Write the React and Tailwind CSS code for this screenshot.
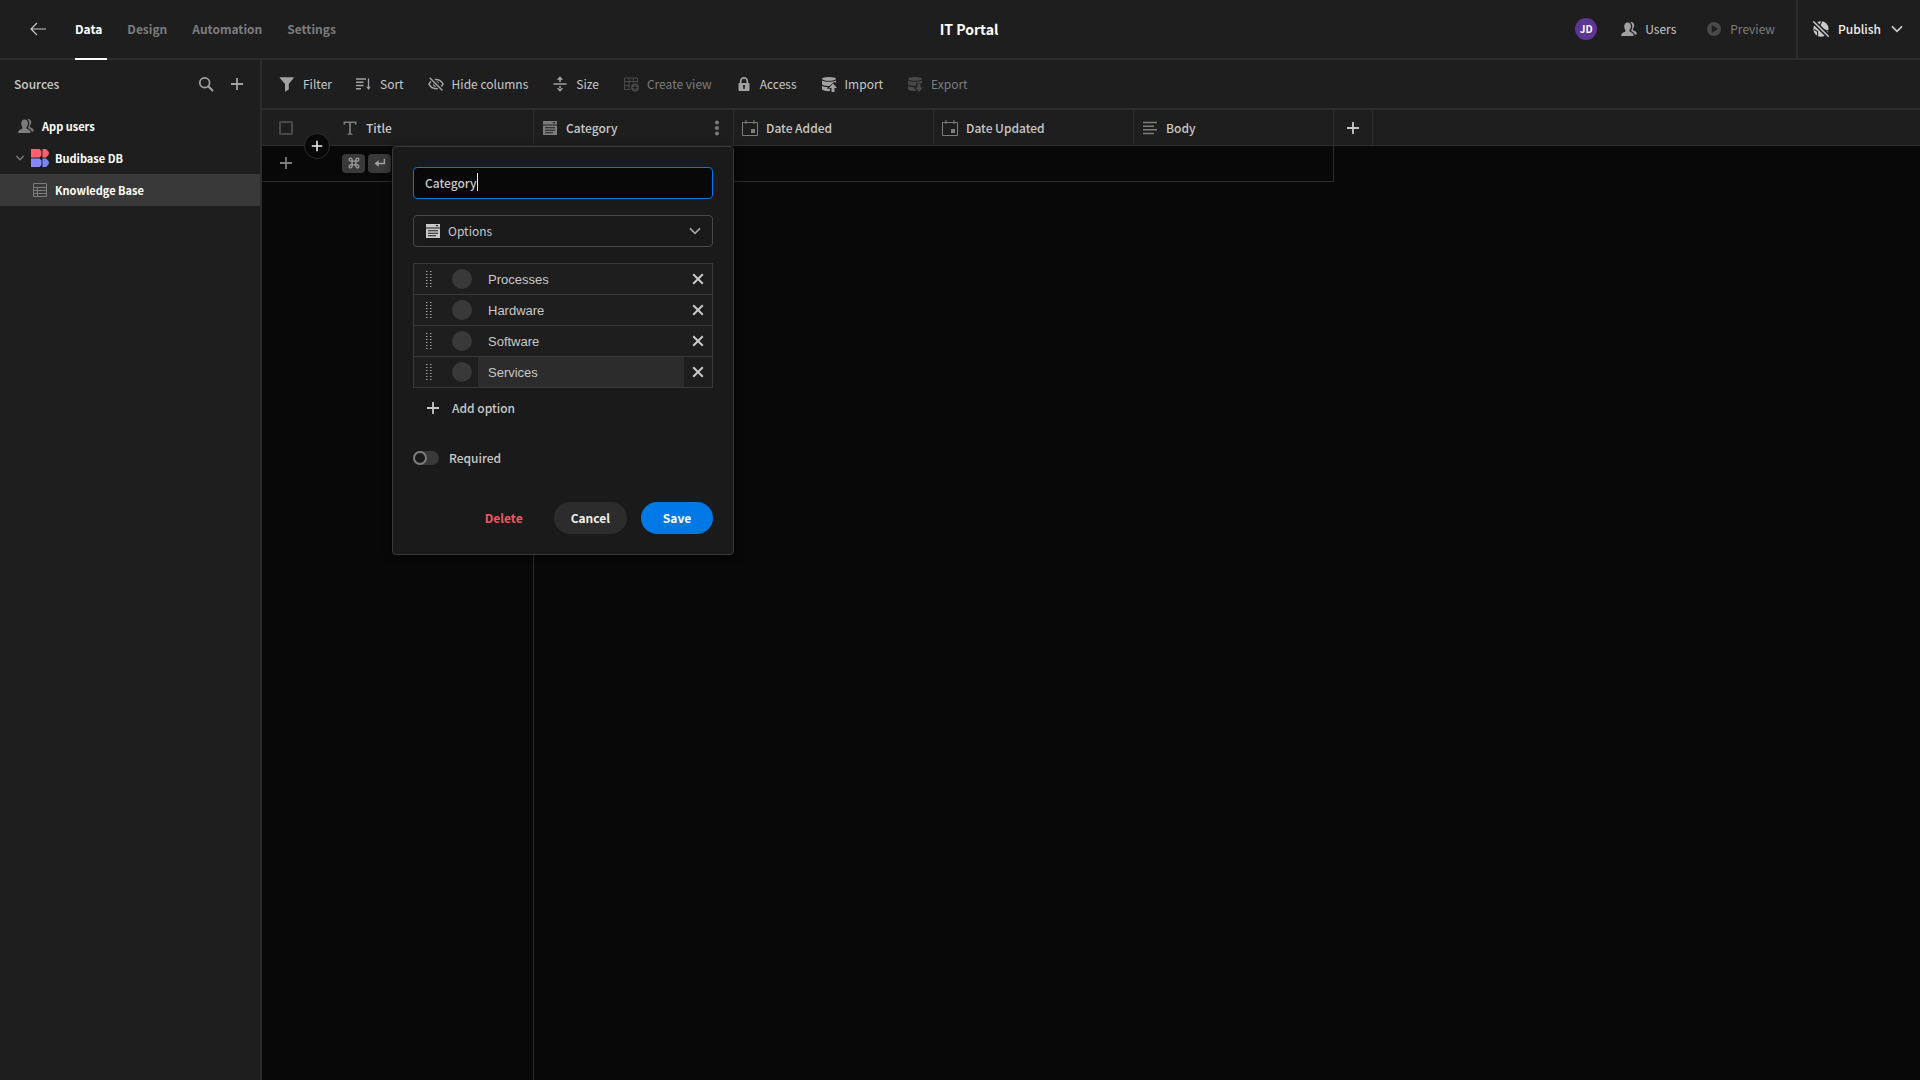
import React from "react";

// Small drawing box shared by all the icons
const Icon = ({ size = 16, className = "", children }) => (
  <svg
    width={size}
    height={size}
    viewBox="0 0 16 16"
    fill="currentColor"
    className={`shrink-0 ${className}`}
    aria-hidden="true"
  >
    {children}
  </svg>
);

const stroke = { fill: "none", stroke: "currentColor" };

const BackIcon = () => (
  <Icon>
    <path d="M16 8H1.5M7 2 1 8l6 6" {...stroke} strokeWidth="1.2" />
  </Icon>
);

const ChevronIcon = ({ className, size }) => (
  <Icon className={className} size={size}>
    <path d="m3.5 5.8 4.5 4.5 4.5-4.5" {...stroke} strokeWidth="1.8" strokeLinecap="round" />
  </Icon>
);

const SearchIcon = () => (
  <Icon>
    <circle cx="6.7" cy="6.7" r="4.9" {...stroke} strokeWidth="1.7" />
    <path d="m10.3 10.3 4.2 4.2" {...stroke} strokeWidth="2" strokeLinecap="round" />
  </Icon>
);

const PlusIcon = ({ className, size }) => (
  <Icon className={className} size={size}>
    <path d="M8 2v12M2 8h12" {...stroke} strokeWidth="1.8" />
  </Icon>
);

const UsersIcon = ({ className }) => (
  <Icon className={className}>
    <path d="M6.6 1.6c2 0 3.4 1.5 3.4 3.7 0 1.5-.6 2.9-1.5 3.7v1.1c0 .5.3.8.8 1 2 .7 3.2 1.4 3.2 3.2v.7H.3v-.7c0-1.8 1.3-2.5 3.3-3.2.5-.2.8-.5.8-1V9C3.6 8.200 3.200 6.800 3.200 5.300c0-2.200 1.400-3.700 3.400-3.700Z" />
    <path d="M9.300 1.200c2.200-.5 3.900.9 3.900 3.400 0 1.300-.5 2.500-1.300 3.200v.9c0 .4.3.7.7.8 1.900.7 3.100 1.400 3.100 3.200v.8h-2.200c-.3-1.800-1.600-2.600-3.300-3.200V9.200c.7-1 1.100-2.300 1.100-3.800 0-1.800-.8-3.300-2-4.200Z" />
  </Icon>
);

const PreviewIcon = () => (
  <Icon>
    <path fillRule="evenodd" d="M8 1a7 7 0 1 1 0 14A7 7 0 0 1 8 1ZM5.8 4v8L12 8Z" />
  </Icon>
);

const PublishIcon = () => (
  <Icon size={18}>
    <circle cx="8" cy="8" r="6.8" />
    <path d="M8.3 1c.6 1.800-1.300 2-1 4M11 8.500l2 1.500 2-1M2 8.500l3 1.800v3.700" fill="none" className="stroke-[#1e1e1e]" />
    <path d="m.5.5 15 15" className="stroke-[#1e1e1e]" strokeWidth="4" />
    <path d="m1.500 1.500 13 13" {...stroke} strokeWidth="1.3" strokeLinecap="round" />
  </Icon>
);

const FilterIcon = () => (
  <Icon>
    <path d="M1 1.2h13.4c.4 0 .5.4.3.7L9.800 8v5.500L6.400 15.600c-.2.100-.4 0-.4-.2V8L.800 1.900c-.2-.3-.1-.7.2-.7Z" />
  </Icon>
);

const SortIcon = () => (
  <Icon>
    <path d="M0 3h10M0 6.200h7.500M0 9.500h7.500M0 12.700h5" {...stroke} strokeWidth="1.5" />
    <path d="M12.5 2.500v10" {...stroke} strokeWidth="1.3" />
    <path d="M10.3 10.800h4.400L12.500 14Z" />
  </Icon>
);

const HideIcon = () => (
  <Icon>
    <path d="M1 8.200C2.500 5.300 5 3.600 8 3.600s5.500 1.700 7 4.600c-1.500 2.900-4 4.500-7 4.500S2.500 11.100 1 8.200Z" {...stroke} strokeWidth="1.5" />
    <circle cx="8" cy="8" r="2.9" />
    <path d="m1.700 1 13.300 14" className="stroke-[#1e1e1e]" strokeWidth="4" />
    <path d="m1.700 1.700 12.800 12.800" {...stroke} strokeWidth="1.5" />
  </Icon>
);

const SizeIcon = () => (
  <Icon>
    <path d="M1.500 7.200h13v1.600h-13zM7.200 3h1.600v3H7.200zM7.200 10h1.600v3H7.200zM8 .3l3.200 3.400H4.800ZM8 15.700l3.200-3.400H4.800Z" />
  </Icon>
);

const ViewIcon = () => (
  <Icon>
    <path d="M7.500 13.500H1.500V2h13v5M1.500 5.500h13M1.500 9.500H7M6 2v11.500M10.300 2v5" {...stroke} />
    <path fillRule="evenodd" d="M12 7.600a4 4 0 1 1 0 8 4 4 0 0 1 0-8Zm-.6 1.600v1.800H9.600v1.200h1.800V14h1.200v-1.800h1.800V11h-1.800V9.200Z" />
  </Icon>
);

const LockIcon = () => (
  <Icon>
    <path d="M4.700 7.500V5.200a3.300 3.300 0 0 1 6.600 0v2.300" {...stroke} strokeWidth="1.7" />
    <path fillRule="evenodd" d="M3.200 7h9.600c.4 0 .7.300.7.700v6.600c0 .4-.3.700-.7.700H3.200c-.4 0-.7-.3-.7-.7V7.700c0-.4.3-.7.7-.7ZM8 8.900a1.200 1.200 0 0 0-.7 2.200V13h1.400v-1.900A1.200 1.200 0 0 0 8 8.900Z" />
  </Icon>
);

const ImportIcon = () => (
  <Icon>
    <ellipse cx="8" cy="2.8" rx="7" ry="1.9" />
    <path d="M1 4.500c2.500 1.700 11.500 1.700 14 0v2.200L13 6 8.600 10H6.900C4 9.900 1.800 9.200 1 8.300Z" />
    <path d="M1 9.800c1.500 1 3.800 1.400 6 1.400l-1 1.600h3v2.300C5 15.400 1.500 14.500 1 13.300Z" />
    <path d="m12 7.500 4 4.500h-2.500v4h-3v-4H8Z" />
  </Icon>
);

const ExportIcon = () => (
  <Icon>
    <ellipse cx="8" cy="2.8" rx="7" ry="1.9" />
    <path d="M1 4.500c2.500 1.700 11.500 1.700 14 0v2.700H9V10C5 10 1.800 9.200 1 8.300Z" />
    <path d="M1 9.800c1.500 1 3.800 1.400 6 1.400l2.500 3.800C5 15.400 1.500 14.500 1 13.300Z" />
    <path d="m12 16-4-4.500h2.500V7.700h3v3.800H16Z" />
  </Icon>
);

const TextIcon = () => (
  <Icon>
    <path d="M1.500 1.500h13v3.300h-1.300c-.1-1.200-.5-1.700-1.600-1.700H8.900v9.500c0 .9.3 1.200 1.700 1.300v.8H5.400v-.8c1.400-.1 1.700-.4 1.700-1.300V3.100H4.400c-1.100 0-1.500.5-1.600 1.700H1.500Z" />
  </Icon>
);

const DropdownIcon = ({ className }) => (
  <Icon className={className}>
    <path fillRule="evenodd" d="M1 1h14v3.500H1ZM10.500 2l1.500 1.700L13.500 2Z" />
    <path fillRule="evenodd" d="M1 5.500h14V15H1ZM3 7.200v1h10v-1ZM3 9.800v1h10v-1ZM3 12.300v1h8v-1Z" />
  </Icon>
);

const CalendarIcon = () => (
  <Icon>
    <path d="M.5 2.500h15v13H.5zM4 0v4M12 0v4" {...stroke} />
    <path d="M9 9h4v4H9z" />
  </Icon>
);

const BodyIcon = () => (
  <Icon>
    <path d="M1 2.500h14M1 6.200h11M1 9.800h14M1 13.500h11" {...stroke} strokeWidth="1.5" />
  </Icon>
);

const MoreIcon = () => (
  <Icon>
    <circle cx="8" cy="2.5" r="2" />
    <circle cx="8" cy="8" r="2" />
    <circle cx="8" cy="13.5" r="2" />
  </Icon>
);

const TableIcon = () => (
  <Icon>
    <path d="M1.500 1.500h13v13h-13zM1.500 5.500h13M1.500 8.500h13M1.500 11.500h13M5.500 5.500v9" {...stroke} />
  </Icon>
);

const CrossIcon = () => (
  <Icon>
    <path d="m3.200 3.200 9.600 9.600M12.800 3.200l-9.600 9.600" {...stroke} strokeWidth="2" />
  </Icon>
);

const EnterIcon = () => (
  <Icon size={14}>
    <path d="M13 3v5.500H4" {...stroke} strokeWidth="1.6" />
    <path d="M6.500 4.800v7.400L1.800 8.500Z" />
  </Icon>
);

const CommandIcon = () => (
  <Icon size={14}>
    <path
      d="M5.800 5.800h4.400v4.400H5.800zM5.800 5.800V4.200a1.700 1.700 0 1 0-1.700 1.600zM10.200 5.800V4.200a1.700 1.700 0 1 1 1.700 1.600zM5.800 10.200v1.600a1.700 1.700 0 1 1-1.700-1.600zM10.200 10.200v1.600a1.700 1.700 0 1 0 1.700-1.600z"
      {...stroke}
      strokeWidth="1.4"
    />
  </Icon>
);

const HandleIcon = () => (
  <svg width="6" height="16" viewBox="0 0 6 16" fill="currentColor" className="shrink-0" aria-hidden="true">
    {[0, 3, 6, 9, 12, 15].map((y) => (
      <path key={y} d={`M0 ${y}h1.500v1H0zM4 ${y}h1.500v1H4z`} />
    ))}
  </svg>
);

const BudibaseLogo = () => (
  <svg width="18" height="18" viewBox="0 0 18 18" className="shrink-0" aria-hidden="true">
    <path fill="#ff5f6d" d="M0 0h8.500L10.500 2v4.500L8.500 8.500H0zM11.500 0H15l2.800 3v2.500L15 8.500h-3.500z" />
    <path fill="#8589ff" d="M0 9.500h8.500l2 2V16l-2 2H0zM11.500 9.500H15l2.800 3V15L15 18h-3.500z" />
    <path fill="#4376d8" d="M13 11h1.200v1.200H13zM15 13h1.200v1.200H15zM13 15h1.200v1.200H13z" />
  </svg>
);

const tabs = ["Data", "Design", "Automation", "Settings"];

const tools = [
  { label: "Filter", icon: FilterIcon },
  { label: "Sort", icon: SortIcon },
  { label: "Hide columns", icon: HideIcon },
  { label: "Size", icon: SizeIcon },
  { label: "Create view", icon: ViewIcon, disabled: true },
  { label: "Access", icon: LockIcon },
  { label: "Import", icon: ImportIcon },
  { label: "Export", icon: ExportIcon, disabled: true },
];

const columns = [
  { label: "Category", icon: DropdownIcon, menu: true },
  { label: "Date Added", icon: CalendarIcon },
  { label: "Date Updated", icon: CalendarIcon },
  { label: "Body", icon: BodyIcon },
];

const options = ["Processes", "Hardware", "Software", "Services"];

const Header = () => (
  <header className="grid h-[60px] shrink-0 grid-cols-[1fr_auto_1fr] border-b-2 border-[#2c2c2c] pl-[18px]">
    <div className="flex items-center pl-3">
      <button type="button" aria-label="Back" className="text-[#c8c8c8]">
        <BackIcon />
      </button>
      <nav className="-mb-0.5 ml-[29px] flex gap-5 self-stretch">
        {tabs.map((tab) => (
          <a
            key={tab}
            href="#"
            className={
              tab === "Data"
                ? "flex items-center border-b-2 border-white pr-[5px] font-semibold text-white"
                : "flex items-center border-b-2 border-transparent pr-[5px] font-semibold text-[#7c7c7c]"
            }
          >
            {tab}
          </a>
        ))}
      </nav>
    </div>
    <h1 className="self-center text-sm font-semibold text-white">IT Portal</h1>
    <div className="flex items-center justify-end">
      <span className="flex size-[22px] items-center justify-center rounded-full bg-[#5c3592] text-[10px] font-semibold text-white">
        JD
      </span>
      <button type="button" className="ml-6 flex items-center gap-2 text-[#c8c8c8]">
        <UsersIcon className="text-[#a2a2a2]" />
        Users
      </button>
      <button type="button" disabled className="ml-[30px] flex items-center gap-2 text-[#7c7c7c]">
        <span className="text-[#494949]">
          <PreviewIcon />
        </span>
        Preview
      </button>
      <button
        type="button"
        className="ml-[21px] flex items-center gap-2 self-stretch border-l-2 border-[#2c2c2c] pr-[15px] pl-3.5 font-medium text-[#efefef]"
      >
        <span className="text-[#c8c8c8]">
          <PublishIcon />
        </span>
        Publish
        <ChevronIcon className="text-[#c8c8c8]" />
      </button>
    </div>
  </header>
);

const Sidebar = () => (
  <aside className="w-[262px] shrink-0 border-r-2 border-[#2c2c2c]">
    <div className="flex h-12 items-center pr-[15px] pl-3.5 text-[#a2a2a2]">
      <h2 className="flex-1 font-medium text-[#c8c8c8]">Sources</h2>
      <button type="button" aria-label="Search">
        <SearchIcon />
      </button>
      <button type="button" aria-label="Add source" className="ml-[15px]">
        <PlusIcon />
      </button>
    </div>
    <ul className="mt-0.5 text-[11px] font-semibold text-white">
      <li>
        <a href="#" className="flex h-8 items-center gap-2 pl-[18px]">
          <UsersIcon className="text-[#7c7c7c]" />
          App users
        </a>
      </li>
      <li>
        <a href="#" className="flex h-8 items-center pl-3.5">
          <ChevronIcon size={12} className="text-[#7c7c7c]" />
          <span className="mr-1.5 ml-[5px]">
            <BudibaseLogo />
          </span>
          Budibase DB
        </a>
      </li>
      <li>
        <a href="#" className="flex h-8 items-center gap-[7px] bg-[#393939] pl-8">
          <span className="text-[#7c7c7c]">
            <TableIcon />
          </span>
          Knowledge Base
        </a>
      </li>
    </ul>
  </aside>
);

const Toolbar = () => (
  <div className="flex h-[50px] shrink-0 items-center gap-6 border-b-2 border-[#2c2c2c] pl-[17px]">
    {tools.map(({ label, icon: ToolIcon, disabled }) => (
      <button
        key={label}
        type="button"
        disabled={disabled}
        className={
          disabled
            ? "flex items-center gap-2 text-[#7c7c7c]"
            : "flex items-center gap-2 text-[#c8c8c8]"
        }
      >
        <span className={disabled ? "text-[#494949]" : "text-[#a2a2a2]"}>
          <ToolIcon />
        </span>
        {label}
      </button>
    ))}
  </div>
);

const ColumnEditor = () => (
  <form
    className="absolute top-9 left-[130px] flex w-[342px] flex-col rounded border border-[#393939] bg-[#1a1a1a] p-5 shadow-[0_1px_8px_rgba(0,0,0,0.6)]"
    onSubmit={(e) => e.preventDefault()}
  >
    <div className="relative">
      <input
        type="text"
        aria-label="Column name"
        defaultValue="Category"
        className="block h-8 w-full rounded border border-[#0078e6] bg-[#080808] px-[11px] pb-0.5 font-medium text-[#c8c8c8] outline-none"
      />
      {/* Caret */}
      <span className="absolute top-1.5 left-16 h-[18px] w-px bg-[#efefef]" />
    </div>
    <div className="relative mt-4">
      <select
        aria-label="Column type"
        className="block h-8 w-full appearance-none rounded border border-[#494949] bg-[#1a1a1a] pl-[34px] text-[#c8c8c8]"
      >
        <option>Options</option>
      </select>
      <DropdownIcon className="pointer-events-none absolute top-2 left-3 text-[#c8c8c8]" />
      <ChevronIcon className="pointer-events-none absolute top-2 right-2.5 text-[#a2a2a2]" />
    </div>
    {/* Options */}
    <ul className="mt-4 border border-b-0 border-[#393939] bg-[#1e1e1e]">
      {options.map((option) => (
        <li key={option} className="flex h-[31px] items-center border-b border-[#393939] pl-3 text-[#a2a2a2]">
          <HandleIcon />
          <button
            type="button"
            aria-label={`${option} color`}
            className="ml-5 size-5 rounded-full bg-[#393939]"
          />
          <input
            type="text"
            aria-label={`${option} option`}
            defaultValue={option}
            className={
              option === "Services"
                ? "ml-1.5 min-w-0 flex-1 self-stretch bg-[#2c2c2c] px-2.5 pt-px font-['Liberation_Sans',sans-serif] text-[13px] text-[#c8c8c8]"
                : "ml-1.5 min-w-0 flex-1 self-stretch px-2.5 pt-px font-['Liberation_Sans',sans-serif] text-[13px] text-[#c8c8c8]"
            }
          />
          <button type="button" aria-label={`Remove ${option}`} className="px-1.5 text-[#c8c8c8]">
            <CrossIcon />
          </button>
        </li>
      ))}
    </ul>
    <button type="button" className="mt-1 flex h-8 items-center gap-[11px] pl-3 font-medium text-[#c8c8c8]">
      <PlusIcon />
      Add option
    </button>
    {/* Required */}
    <label className="mt-[18px] flex h-8 items-center gap-2.5 font-medium text-[#c8c8c8]">
      <input
        type="checkbox"
        role="switch"
        className="h-3.5 w-[26px] appearance-none rounded-full bg-[#393939] before:block before:size-3.5 before:rounded-full before:border-2 before:border-[#7c7c7c] before:bg-[#1a1a1a]"
      />
      Required
    </label>
    <div className="mt-7 flex justify-end gap-3.5 font-semibold">
      <button type="button" className="h-8 rounded-full px-[17px] text-[#f2555f]">
        Delete
      </button>
      <button type="button" className="h-8 rounded-full bg-[#2c2c2c] px-[17px] text-[#efefef]">
        Cancel
      </button>
      <button type="submit" className="h-8 w-[72px] rounded-full bg-[#0078e6] text-white">
        Save
      </button>
    </div>
  </form>
);

const Grid = () => (
  <div className="relative flex flex-1 flex-col bg-[#080808]">
    <table className="w-full table-fixed border-separate border-spacing-0">
      <colgroup>
        <col className="w-[72px]" />
        <col className="w-[200px]" />
        <col className="w-[200px]" />
        <col className="w-[200px]" />
        <col className="w-[200px]" />
        <col className="w-[200px]" />
        <col className="w-[39px]" />
        <col />
      </colgroup>
      <thead>
        <tr className="h-9 bg-[#1e1e1e] text-[#c8c8c8]">
          <th className="border-b border-[#2c2c2c] p-0 pl-[17px]">
            <input
              type="checkbox"
              aria-label="Select all rows"
              className="block size-3.5 appearance-none rounded-xs border-2 border-[#494949]"
            />
          </th>
          <th className="border-r border-b border-[#2c2c2c] p-0 font-medium">
            <div className="flex items-center gap-2 pl-2">
              <span className="text-[#7c7c7c]">
                <TextIcon />
              </span>
              Title
            </div>
          </th>
          {columns.map(({ label, icon: ColumnIcon, menu }) => (
            <th key={label} className="border-r border-b border-[#2c2c2c] p-0 font-medium">
              <div className="flex items-center gap-2 pr-2 pl-2 text-left">
                <span className="text-[#7c7c7c]">
                  <ColumnIcon />
                </span>
                <span className="flex-1">{label}</span>
                {menu && (
                  <button type="button" aria-label="Column menu" className="text-[#7c7c7c]">
                    <MoreIcon />
                  </button>
                )}
              </div>
            </th>
          ))}
          <th className="border-r border-b border-[#2c2c2c] p-0">
            <button type="button" aria-label="Add column" className="mx-auto block">
              <PlusIcon />
            </button>
          </th>
          <th className="border-b border-[#2c2c2c] p-0" />
        </tr>
      </thead>
      <tbody>
        <tr className="h-9">
          <td className="border-b border-[#2c2c2c] p-0 pb-px pl-4 text-[#7c7c7c]">
            <button type="button" aria-label="Add row" className="block">
              <PlusIcon />
            </button>
          </td>
          <td className="border-r border-b border-[#2c2c2c] p-0 pb-px pl-2">
            <div className="flex gap-[3px] text-[#a2a2a2]">
              <kbd className="flex h-[19px] w-[23px] items-center justify-center rounded bg-[#393939]">
                <CommandIcon />
              </kbd>
              <kbd className="flex h-[19px] w-[23px] items-center justify-center rounded bg-[#393939]">
                <EnterIcon />
              </kbd>
            </div>
          </td>
          <td colSpan={4} className="border-r border-b border-[#2c2c2c] p-0" />
          <td colSpan={2} className="p-0" />
        </tr>
      </tbody>
    </table>
    <div className="w-[272px] flex-1 border-r border-[#2c2c2c]" />
    <button
      type="button"
      aria-label="Insert row"
      className="absolute top-[23px] left-[42px] flex size-[26px] items-center justify-center rounded-full border border-[#2c2c2c] bg-[#080808] text-[#efefef]"
    >
      <PlusIcon size={14} />
    </button>
    <ColumnEditor />
  </div>
);

const App = () => {
  return (
    <div className="flex min-h-screen flex-col bg-[#1e1e1e] font-['Noto_Sans_CJK_SC','Noto_Sans',sans-serif] text-xs">
      <Header />
      <div className="flex flex-1">
        <Sidebar />
        <main className="flex min-w-0 flex-1 flex-col">
          <Toolbar />
          <Grid />
        </main>
      </div>
    </div>
  );
};

export default App;
